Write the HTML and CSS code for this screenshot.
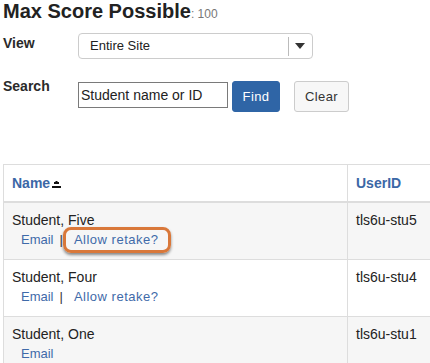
FILE: index.html
```html
<!DOCTYPE html>
<html>
<head>
<meta charset="utf-8">
<link rel="stylesheet" href="styles.css">
</head>
<body>
<div class="page">
  <h1 class="title">Max Score Possible<span class="max">: 100</span></h1>

  <div class="row row-view">
    <label class="lbl">View</label>
    <div class="select">
      <span class="select-text">Entire Site</span>
      <span class="select-div"></span>
      <svg class="select-arrow" width="10" height="6" viewBox="0 0 10 6"><path d="M0 0H10L5 6Z" fill="#333"/></svg>
    </div>
  </div>

  <div class="row row-search">
    <label class="lbl">Search</label>
    <div class="controls">
      <input class="search" type="text" value="Student name or ID">
      <button class="btn btn-find">Find</button>
      <button class="btn btn-clear">Clear</button>
    </div>
  </div>

  <div class="table-wrap">
    <table class="roster">
      <colgroup><col class="c1"><col class="c2"></colgroup>
      <thead>
        <tr>
          <th><a class="head-link">Name</a><svg class="sort" width="9" height="8" viewBox="0 0 9 8"><path d="M3.5 0H5.5V1H7V3H2V1H3.5Z" fill="#111"/><rect x="0" y="5" width="9" height="2" fill="#111"/></svg></th>
          <th><a class="head-link">UserID</a></th>
        </tr>
      </thead>
      <tbody>
        <tr class="alt">
          <td>
            <div class="name">Student, Five</div>
            <div class="links"><a class="lnk email">Email</a><span class="sep">|</span><a class="lnk retake hl">Allow retake?</a></div>
          </td>
          <td><div class="name">tls6u-stu5</div></td>
        </tr>
        <tr>
          <td>
            <div class="name">Student, Four</div>
            <div class="links"><a class="lnk email">Email</a><span class="sep">|</span><a class="lnk retake">Allow retake?</a></div>
          </td>
          <td><div class="name">tls6u-stu4</div></td>
        </tr>
        <tr class="alt">
          <td>
            <div class="name">Student, One</div>
            <div class="links"><a class="lnk email">Email</a></div>
          </td>
          <td><div class="name">tls6u-stu1</div></td>
        </tr>
      </tbody>
    </table>
  </div>
</div>
</body>
</html>
```

FILE: styles.css
```css
html, body {
  margin: 0;
  padding: 0;
  overflow: hidden;
  background: #fff;
}
body {
  font-family: "Liberation Sans", Arial, sans-serif;
  color: #222;
}
.page {
  padding-left: 3px;
}
.title {
  margin: 0;
  height: 23px;
  font-size: 20px;
  line-height: 23px;
  font-weight: bold;
  color: #222;
}
.max {
  font-size: 12px;
  line-height: 12px;
  font-weight: normal;
  color: #777;
}
.row {
  display: flex;
  align-items: flex-start;
}
.lbl {
  width: 75px;
  font-size: 14px;
  font-weight: bold;
  line-height: 20px;
  color: #2a2a2a;
}
.row-view {
  margin-top: 10px;
}
.select {
  width: 233px;
  height: 24px;
  border: 1px solid #ccc;
  border-radius: 4px;
  display: flex;
  align-items: center;
  font-size: 13px;
  line-height: 16px;
  color: #222;
}
.select-text {
  flex: 1;
  padding-left: 11px;
}
.select-div {
  width: 1px;
  height: 19px;
  background: #bbb;
}
.select-arrow {
  margin: 0 7px 0 6px;
}
.row-search {
  margin-top: 17px;
}
.controls {
  display: flex;
  align-items: flex-start;
  margin-top: 5px;
}
.search {
  margin: 1px 0 0 0;
  width: 146px;
  height: 24px;
  padding: 0 0 0 2px;
  border: 1px solid #7a7a7a;
  font-family: "Liberation Sans", Arial, sans-serif;
  font-size: 14px;
  color: #222;
  box-sizing: content-box;
}
.btn {
  height: 31px;
  border-radius: 3px;
  font-family: "Liberation Sans", Arial, sans-serif;
  font-size: 13px;
  letter-spacing: 0.4px;
  padding: 0;
  margin: 0;
}
.btn-find {
  margin-left: 4px;
  width: 48px;
  background: #2f65a6;
  border: 1px solid #2f65a6;
  color: #fff;
}
.btn-clear {
  margin-left: 14px;
  width: 55px;
  background: #f7f7f7;
  border: 1px solid #ccc;
  color: #333;
}
.table-wrap {
  margin-top: 52px;
  width: 600px;
}
.roster {
  border-collapse: collapse;
  table-layout: fixed;
  width: 540px;
}
.roster col.c1 {
  width: 344px;
}
.roster th, .roster td {
  text-align: left;
  vertical-align: top;
  border: 1px solid #ddd;
}
.roster th {
  padding: 8px 8px;
  line-height: 20px;
  font-size: 14px;
  border-bottom: 2px solid #ddd;
  background: #fff;
}
.head-link {
  color: #3b67a6;
  font-weight: bold;
}
.sort {
  margin-left: 2px;
  vertical-align: -1px;
}
.roster td {
  padding: 7px 8px 9px;
  background: #fff;
}
.roster tr.alt td {
  background: #f6f6f6;
}
.name {
  font-size: 14px;
  line-height: 20px;
  color: #222;
}
.links {
  font-size: 13px;
  line-height: 20px;
}
.lnk {
  color: #3f6aa9;
}
.email {
  margin-left: 9px;
}
.sep {
  margin-left: 6px;
  color: #333;
}
.retake {
  margin-left: 11px;
  letter-spacing: 0.5px;
}
.hl {
  position: relative;
}
.hl::after {
  content: "";
  position: absolute;
  top: -5px;
  bottom: -6px;
  left: -11px;
  right: -13px;
  border: 3px solid #d9783a;
  border-radius: 8px;
  box-shadow: 0 2px 3px rgba(0, 0, 0, 0.45);
}
```
